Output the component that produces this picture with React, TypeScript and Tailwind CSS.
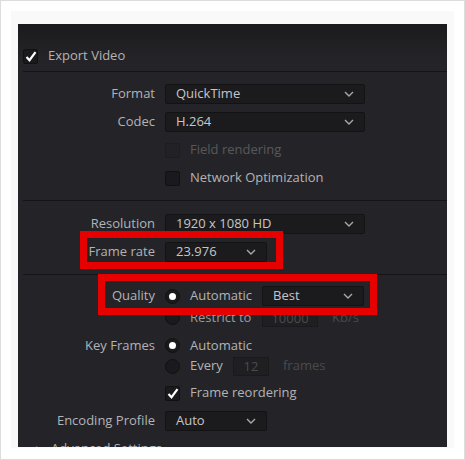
import React from 'react';

const font = { fontFamily: '"Open Sans", "Noto Sans", sans-serif' };

const Chevron: React.FC = () => (
    <svg width="10" height="6" viewBox="0 0 10 6" className="shrink-0">
        <path d="M1 1l4 4 4-4" fill="none" stroke="#a8a8ac" strokeWidth="1.4" />
    </svg>
);

const Select: React.FC<{ value: string; w: string }> = ({ value, w }) => (
    <div className={`${w} h-[20px] bg-[#1b1b1e] border border-[#131315] rounded-[2px] flex items-center justify-between pl-[10px] pr-[10px] text-[#c6c6c8]`}>
        <span>{value}</span>
        <Chevron />
    </div>
);

const Check: React.FC<{ checked?: boolean; disabled?: boolean }> = ({ checked, disabled }) => (
    <div className={`w-[15px] h-[15px] rounded-[2px] border flex items-center justify-center shrink-0 ${disabled ? 'bg-[#222226] border-[#1d1d20]' : 'bg-[#1a1a1d] border-[#111113]'}`}>
        {checked && (
            <svg width="12" height="11" viewBox="0 0 12 11">
                <path d="M1.5 6l3 3.2L10.5 1.2" fill="none" stroke="#ffffff" strokeWidth="2.2" />
            </svg>
        )}
    </div>
);

const Radio: React.FC<{ checked?: boolean }> = ({ checked }) => (
    <div className="w-[15px] h-[15px] rounded-full bg-[#1a1a1d] border border-[#111113] flex items-center justify-center shrink-0">
        {checked && <div className="w-[7px] h-[7px] rounded-full bg-white" />}
    </div>
);

const Row: React.FC<{ label?: string; h: string; children: React.ReactNode }> = ({ label, h, children }) => (
    <div className={`flex items-center ${h}`}>
        <div className="w-[137px] text-right text-[#b3b3b6]">{label}</div>
        <div className="ml-[10px] flex items-center">{children}</div>
    </div>
);

const App: React.FC = () => {
    return (
        <div className="w-[465px] h-[460px] bg-white border border-[#dcdcdc] pt-[10px] px-[10px] text-[13px]" style={font}>
            <div className="h-[437px] bg-[#f9f9f9] pt-[13px] px-[7px]">
                <div className="relative h-[423px] overflow-hidden bg-gradient-to-b from-[#1b1b1e] via-[#242428] via-[8%] to-[#242428]">
                    {/* Export video */}
                    <div className="pt-[22px] pl-[5px] h-[42px] flex items-end">
                        <div className="h-[20px] flex items-center gap-[10px]">
                            <Check checked />
                            <span className="text-[#b3b3b6]">Export Video</span>
                        </div>
                    </div>
                    <div className="mt-[5px] ml-[5px] h-px bg-[#141416]" />

                    <div className="mt-[8px]">
                        <Row label="Format" h="h-[28px]"><Select value="QuickTime" w="w-[200px]" /></Row>
                        <Row label="Codec" h="h-[28px]"><Select value="H.264" w="w-[200px]" /></Row>
                        <Row h="h-[28px]">
                            <Check disabled />
                            <span className="ml-[10px] text-[#58585c]">Field rendering</span>
                        </Row>
                        <Row h="h-[28px]">
                            <Check />
                            <span className="ml-[10px] text-[#b3b3b6]">Network Optimization</span>
                        </Row>
                    </div>
                    <div className="mt-[8px] ml-[5px] h-px bg-[#141416]" />

                    <div className="mt-[9px]">
                        <Row label="Resolution" h="h-[28px]"><Select value="1920 x 1080 HD" w="w-[200px]" /></Row>
                        <Row label="Frame rate" h="h-[28px]"><Select value="23.976" w="w-[102px]" /></Row>
                    </div>
                    <div className="mt-[8px] ml-[5px] h-px bg-[#141416]" />

                    <div className="mt-[10px]">
                        <Row label="Quality" h="h-[22px]">
                            <Radio checked />
                            <span className="ml-[10px] w-[72px] text-[#b3b3b6]">Automatic</span>
                            <Select value="Best" w="w-[102px]" />
                        </Row>
                        <Row h="h-[21px]">
                            <Radio />
                            <span className="ml-[10px] w-[72px] text-[#9a9a9e]">Restrict to</span>
                            <div className="w-[56px] h-[18px] bg-[#1f1f22] border border-[#1a1a1c] text-center text-[#4a4a4e] leading-[16px]">10000</div>
                            <span className="ml-[14px] text-[#4a4a4e]">Kb/s</span>
                        </Row>
                        <div className="mt-[7px]">
                            <Row label="Key Frames" h="h-[21px]">
                                <Radio checked />
                                <span className="ml-[10px] text-[#b3b3b6]">Automatic</span>
                            </Row>
                            <Row h="h-[20px]">
                                <Radio />
                                <span className="ml-[10px] w-[43px] text-[#b3b3b6]">Every</span>
                                <div className="w-[36px] h-[19px] bg-[#1f1f22] border border-[#1a1a1c] text-center text-[#4a4a4e] leading-[17px]">12</div>
                                <span className="ml-[14px] text-[#4a4a4e]">frames</span>
                            </Row>
                        </div>
                        <div className="mt-[6px]">
                            <Row h="h-[22px]">
                                <Check checked />
                                <span className="ml-[10px] text-[#b3b3b6]">Frame reordering</span>
                            </Row>
                        </div>
                        <div className="mt-[6px]">
                            <Row label="Encoding Profile" h="h-[21px]"><Select value="Auto" w="w-[102px]" /></Row>
                        </div>
                        <div className="mt-[8px] h-[20px] pl-[18px] flex items-center gap-[8px] text-[#b3b3b6]">
                            <span className="text-[9px]">▶</span>
                            <span>Advanced Settings</span>
                        </div>
                    </div>

                    {/* annotation boxes */}
                    <div className="absolute left-[62px] top-[207px] w-[203px] h-[38px] border-[7px] border-[#e60000]" />
                    <div className="absolute left-[80px] top-[250px] w-[279px] h-[41px] border-[7px] border-[#e60000]" />
                </div>
            </div>
        </div>
    );
};

export default App;
